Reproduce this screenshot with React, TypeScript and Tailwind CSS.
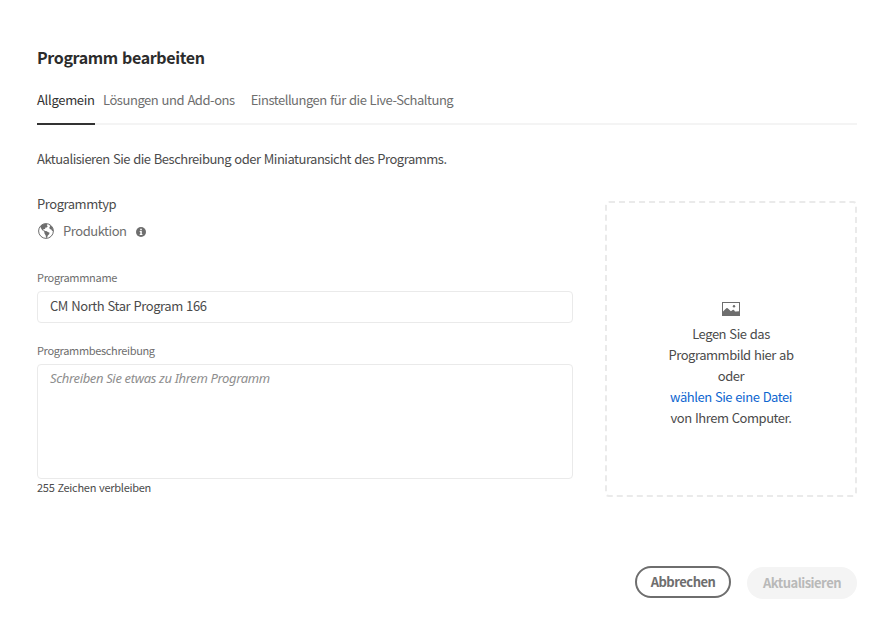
import { useState } from 'react';

const tabs = [
  { label: 'Allgemein', cls: 'mr-2 tracking-[-0.3px]' },
  { label: 'Lösungen und Add-ons', cls: 'mr-4 tracking-[-0.45px]' },
  { label: 'Einstellungen für die Live-Schaltung', cls: 'tracking-[-0.48px]' },
];

function GlobeIcon() {
  return (
    <svg className="ml-px size-4 text-[#6e6e6e]" viewBox="0 0 16 16" fill="none">
      <circle cx="8" cy="8" r="7.4" stroke="currentColor" strokeWidth="1" />
      <path
        fill="currentColor"
        d="M3.200 2.300 6.300.8l2.900.1-.4 1.300.9 1.100-.9 1.200-1.300-.1-.5 1.600-1.600.3-.3.900 1.500.3 1 .9L6.200 8.600 4.300 7.300 3 5.300l-.600-1.600zM6.300 8.300l2-.3 1.600.9 1.700.9-.5 1.500-1.300 1.200-.7 2-1 .4-.4-2.400-1.300-2.200zM11.500 2.300l1.900.9 1.500 2.500.4 2.500-1.300-.4-.7-1.400-1.500-.3-.5-1.700.8-.8z"
      />
    </svg>
  );
}

function InfoIcon() {
  return (
    <svg className="mt-[3px] size-[10px]" viewBox="0 0 10 10">
      <circle cx="5" cy="5" r="5" fill="#6e6e6e" />
      <path fill="#fff" d="M4.200 1.700h1.600v1.500H4.200zM3.700 4h2.100v3.100h.6v.9H3.700v-.9h.6V4.900h-.6z" />
    </svg>
  );
}

function ImageIcon() {
  return (
    <svg className="h-[14px] w-[18px]" viewBox="0 0 18 14" fill="#6e6e6e">
      <path
        fillRule="evenodd"
        d="M0 0h18v14H0zM1 1v8.500l3.300-3.200q.7-.5 1.400 0l3.200 3 1.700-1.400q.7-.5 1.400 0L13 9.500h1l3-.2V1z"
      />
      <circle cx="12" cy="4.200" r="1.200" />
    </svg>
  );
}

export default function App() {
  const [text, setText] = useState('');
  return (
    <main className="h-[636px] w-[893px] bg-white pt-[45px] pr-9 pl-[37px] font-['Noto_Sans_CJK_JP','Noto_Sans',sans-serif] text-[13px] leading-[21px] tracking-[-0.46px] text-[#4b4b4b] [word-spacing:0.8px]">
      <h1 className="h-6 text-[16px] leading-6 font-bold tracking-[-0.36px] text-[#2c2c2c]">Programm bearbeiten</h1>
      <nav className="mt-5 flex h-9 border-b-2 border-[#f4f4f4] whitespace-nowrap">
        {tabs.map((t, i) => (
          <button
            key={t.label}
            className={`h-9 border-b-2 pb-[15px] text-left [word-spacing:0.8px] ${t.cls} ${i === 0 ? 'w-[58px] border-[#323232] text-[#323232]' : 'border-transparent text-[#6e6e6e]'}`}
          >
            {t.label}
          </button>
        ))}
      </nav>
      <p className="mt-[23px] tracking-[-0.49px]">Aktualisieren Sie die Beschreibung oder Miniaturansicht des Programms.</p>
      <div className="mt-[24px] flex justify-between">
        <section className="w-[536px]">
          <h2>Programmtyp</h2>
          <div className="mt-[6px] flex h-[21px] items-center text-[#6e6e6e]">
            <GlobeIcon />
            <span className="mr-[9px] ml-[9px]">Produktion</span>
            <InfoIcon />
          </div>
          <label className="mt-[27px] block h-[18px] text-[11px] leading-[18px] tracking-[-0.3px] text-[#6e6e6e]">Programmname</label>
          <input
            className="mt-[5px] block h-8 w-full rounded-[4px] border border-[#eaeaea] px-3 pb-[3px] tracking-[-0.43px] outline-none [word-spacing:0.8px]"
            defaultValue="CM North Star Program 166"
          />
          <label className="mt-[18px] block h-[18px] text-[11px] leading-[18px] tracking-[-0.34px] text-[#6e6e6e]">Programmbeschreibung</label>
          <textarea
            className="mt-[5px] block h-[115px] w-full resize-none rounded-[4px] border border-[#eaeaea] px-3 py-[3px] font-['Noto_Sans',sans-serif] tracking-[-0.35px] outline-none placeholder:text-[#8e8e8e] placeholder:italic"
            placeholder="Schreiben Sie etwas zu Ihrem Programm"
            value={text}
            onChange={(e) => setText(e.target.value)}
          />
          <p className="-mt-px text-[11px] leading-[18px] tracking-[-0.28px]">255 Zeichen verbleiben</p>
        </section>
        <section className="mt-2 flex h-[296px] w-[252px] flex-col items-center rounded-[4px] border-2 border-dashed border-[#eaeaea] pt-[99px] text-center">
          <ImageIcon />
          <div className="mt-[7px] whitespace-nowrap">
            <p>Legen Sie das</p>
            <p>Programmbild hier ab</p>
            <p>oder</p>
            <p className="text-[#0d66d0]">wählen Sie eine Datei</p>
            <p>von Ihrem Computer.</p>
          </div>
        </section>
      </div>
      <footer className="mt-[69px] flex justify-end gap-4 font-bold tracking-[-0.5px]">
        <button className="h-8 w-24 rounded-full border-2 border-[#6e6e6e] pb-[2px] text-[#6e6e6e]">Abbrechen</button>
        <button className="mt-px h-8 w-[110px] rounded-full bg-[#f4f4f4] pb-[2px] text-[#b9b9b9]">Aktualisieren</button>
      </footer>
    </main>
  );
}
